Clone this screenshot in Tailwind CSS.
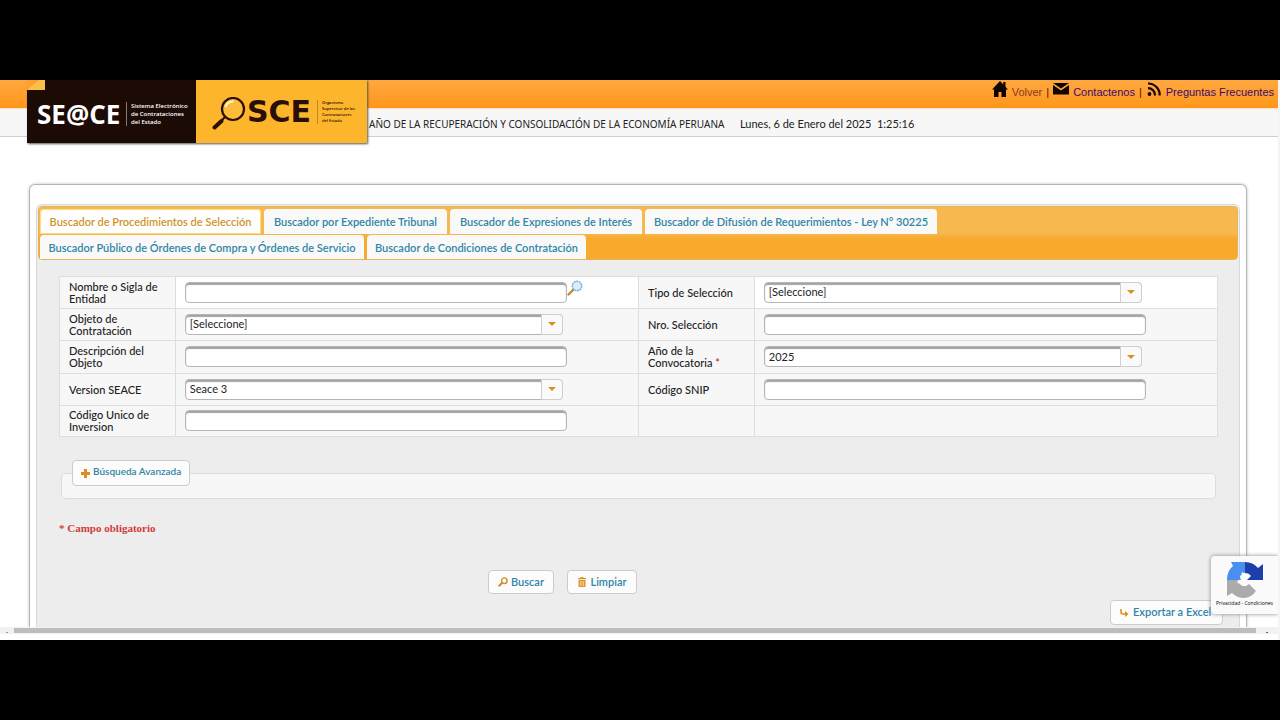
<!DOCTYPE html>
<html lang="es">
<head>
    <meta charset="UTF-8">
    <meta name="viewport" content="width=device-width, initial-scale=1.0">
    <title>SEACE - Buscador de Procedimientos de Selección</title>
    <script src="https://cdn.jsdelivr.net/npm/@tailwindcss/browser@4"></script>
</head>
<body class="bg-black font-['Lato','Noto_Sans',sans-serif] text-[11px] text-[#222]">

    <div class="h-screen flex flex-col py-20">
        <div class="relative flex-1 min-h-0 flex flex-col bg-white overflow-hidden border-r-2 border-[#f4f4f4]">

            <!-- Header -->
            <header class="relative shrink-0">
                <nav class="h-7 flex items-start justify-end gap-1 pr-1 bg-linear-to-b from-[#ffa840] to-[#ff9616] font-['Liberation_Sans',sans-serif] text-[11px] leading-6 text-[#4a1500]">
                    <svg class="w-4 h-4 mt-px" viewBox="0 0 16 16" fill="#100500"><path d="M8 0 0 8.500h2V16h4.500v-5h3v5H14V8.500h2L13.500 5.800V1h-2.200v2.500z"/></svg>
                    <a href="#" class="text-[#8c3a1c]">Volver</a>
                    <span>|</span>
                    <svg class="w-4 h-4 mt-px" viewBox="0 0 16 16" fill="#100500"><path d="M0 2h16L8 7.500zM0 4l8 5.500L16 4v9.500H0z"/></svg>
                    <a href="#" class="text-[#3b0a6b]">Contactenos</a>
                    <span>|</span>
                    <svg class="w-4 h-4 mt-px" viewBox="0 0 16 16" fill="none" stroke="#100500" stroke-width="2.200"><circle cx="3.500" cy="13" r="1.900" fill="#100500" stroke="none"/><path d="M2 7.200a7 7 0 0 1 7 7.300M2 2.500a11.500 11.500 0 0 1 11.700 12"/></svg>
                    <a href="#" class="text-[#3b0a6b]">Preguntas Frecuentes</a>
                </nav>
                <div class="h-[29px] flex items-center gap-6 pl-[369px] pt-[3px] bg-[#f7f7f7] border-t border-t-[#fbe3c6] border-b border-b-[#cfcfcf]">
                    <span class="w-[347px] whitespace-nowrap font-['Noto_Sans',sans-serif] text-[10px]">AÑO DE LA RECUPERACIÓN Y CONSOLIDACIÓN DE LA ECONOMÍA PERUANA</span>
                    <span class="whitespace-nowrap">Lunes, 6 de Enero del 2025&nbsp; 1:25:16</span>
                </div>

                <!-- Logos -->
                <div class="absolute left-[27px] top-0 flex h-[63px] shadow-[1px_1px_2px_#555]">
                    <div class="relative w-[169px] flex items-center gap-1 pl-2.5 pt-1 bg-[#1c0a05] text-white">
                        <svg class="absolute left-0 top-0 w-[18px] h-2.5" viewBox="0 0 18 10"><path d="M0 0h18v10H0z" fill="#ffa02c"/><path d="M0 10 12 0h6v10z" fill="#f9bf4a"/></svg>
                        <span class="w-[85px] font-['Open_Sans',sans-serif] font-bold text-[26px] leading-8 whitespace-nowrap">SE@CE</span>
                        <span class="pl-1 border-l border-[#8a7a74] font-['Open_Sans',sans-serif] text-[6px] leading-[8px] font-semibold whitespace-nowrap">Sistema Electrónico<br>de Contrataciones<br>del Estado</span>
                    </div>
                    <div class="w-[171px] flex items-center pl-4 bg-[#fdb52c] text-[#2a0f08]">
                        <svg class="w-[35px] h-[34px] mt-1" viewBox="0 0 35 34" fill="none" stroke="#2a0f08"><circle cx="21" cy="12" r="11" stroke-width="2.200" fill="#fdbb3c"/><path d="M13.500 10a8 8 0 0 1 8-5.500" stroke="#fff3d0" stroke-width="2"/><path d="m13 20-3 3" stroke-width="2"/><path d="m9.500 24-7 6.500" stroke-width="4" stroke-linecap="round"/></svg>
                        <span class="w-[70px] font-['DejaVu_Sans',sans-serif] font-bold text-[30px] leading-8 whitespace-nowrap">SCE</span>
                        <span class="pl-1 border-l border-[#b98a35] font-['Open_Sans',sans-serif] text-[4px] leading-[6px] font-semibold whitespace-nowrap">Organismo<br>Supervisor de las<br>Contrataciones<br>del Estado</span>
                    </div>
                </div>
            </header>

            <!-- Main panel -->
            <main class="flex-1 min-h-0 mt-[47px] ml-[29px] mr-[31px] px-1.5 pt-[19px] border border-b-0 border-[#b5b5b5] rounded-t-md shadow-[0_0_3px_#bbb] overflow-hidden">
                <div class="h-full px-px pt-px border border-b-0 border-[#d8d8d8] rounded-t-md bg-[#ededed]">

                    <!-- Tabs -->
                    <div class="flex flex-col gap-px pt-0.5 px-px border border-[#e3b45c] rounded bg-linear-to-b from-[#f6b84f] from-50% to-[#f7aa2e] to-60% text-[#2f86a5] font-semibold leading-[26px]">
                        <div class="flex gap-[3px]">
                            <button class="w-[221px] h-[25px] rounded-t-sm bg-white text-[#cf9427] whitespace-nowrap shadow-[inset_0_0_1px_1px_#fbdc7a]">Buscador de Procedimientos de Selección</button>
                            <button class="w-[183px] h-[25px] rounded-t-sm bg-[#f9f9f9] whitespace-nowrap">Buscador por Expediente Tribunal</button>
                            <button class="w-[192px] h-[25px] rounded-t-sm bg-[#f9f9f9] whitespace-nowrap">Buscador de Expresiones de Interés</button>
                            <button class="w-[292px] h-[25px] rounded-t-sm bg-[#f9f9f9] whitespace-nowrap">Buscador de Difusión de Requerimientos - Ley N° 30225</button>
                        </div>
                        <div class="flex gap-[3px]">
                            <button class="w-[324px] h-6 rounded-t-sm bg-[#f9f9f9] whitespace-nowrap">Buscador Público de Órdenes de Compra y Órdenes de Servicio</button>
                            <button class="w-[219px] h-6 rounded-t-sm bg-[#f9f9f9] whitespace-nowrap">Buscador de Condiciones de Contratación</button>
                        </div>
                    </div>

                    <!-- Search form -->
                    <form class="pl-[21px] pr-5 pt-4">
                        <table class="w-full table-fixed border-collapse bg-[#f7f7f7] leading-[12px] [&_td]:border [&_td]:border-[#dedede] [&_th]:border [&_th]:border-[#dedede] [&_th]:px-[9px] [&_th]:text-left [&_th]:font-medium [&_td]:pl-[9px] [&_td]:pb-px [&_td]:pt-0">
                            <colgroup>
                                <col class="w-[10%]">
                                <col class="w-[40%]">
                                <col class="w-[10%]">
                                <col class="w-[40%]">
                            </colgroup>
                            <tr class="h-8">
                                <th><label for="entidad">Nombre o Sigla de Entidad</label></th>
                                <td class="bg-white">
                                    <div class="flex items-center">
                                        <input id="entidad" type="text" class="w-[382px] h-[21px] px-1 bg-white border border-[#b5b5b5] rounded shadow-[inset_0_2px_1px_#a3a3a3]">
                                        <button type="button" aria-label="Buscar entidad" class="mb-2">
                                            <svg class="w-4 h-4" viewBox="0 0 16 16" fill="none"><path d="m1.500 14.500 5-5" stroke="#c8862c" stroke-width="2.400" stroke-linecap="round"/><path d="m6 10 2-2" stroke="#555" stroke-width="1.500"/><circle cx="10" cy="6" r="4.700" fill="#d9eefa" stroke="#7fb4d6" stroke-width="1.500" stroke-dasharray="2 .6"/></svg>
                                        </button>
                                    </div>
                                </td>
                                <th><label for="tipo">Tipo de Selección</label></th>
                                <td class="bg-white">
                                    <div class="relative w-[378px]">
                                        <select id="tipo" class="block appearance-none w-full h-[21px] px-1 bg-white border border-[#b5b5b5] rounded shadow-[inset_0_2px_1px_#a3a3a3]"><option>[Seleccione]</option></select>
                                        <span class="absolute inset-y-0 right-0 w-[22px] flex items-center justify-center border border-[#cfcfcf] rounded-r bg-[#fafafa] pointer-events-none"><svg class="w-2 h-1" viewBox="0 0 8 4" fill="#d98f22"><path d="M0 0h8L4 4z"/></svg></span>
                                    </div>
                                </td>
                            </tr>
                            <tr class="h-8">
                                <th><label for="objeto">Objeto de Contratación</label></th>
                                <td>
                                    <div class="relative w-[378px]">
                                        <select id="objeto" class="block appearance-none w-full h-[21px] px-1 bg-white border border-[#b5b5b5] rounded shadow-[inset_0_2px_1px_#a3a3a3]"><option>[Seleccione]</option></select>
                                        <span class="absolute inset-y-0 right-0 w-[22px] flex items-center justify-center border border-[#cfcfcf] rounded-r bg-[#fafafa] pointer-events-none"><svg class="w-2 h-1" viewBox="0 0 8 4" fill="#d98f22"><path d="M0 0h8L4 4z"/></svg></span>
                                    </div>
                                </td>
                                <th><label for="nro">Nro. Selección</label></th>
                                <td><input id="nro" type="text" class="block w-[382px] h-[21px] px-1 bg-white border border-[#b5b5b5] rounded shadow-[inset_0_2px_1px_#a3a3a3]"></td>
                            </tr>
                            <tr class="h-[33px]">
                                <th><label for="descripcion">Descripción del Objeto</label></th>
                                <td><input id="descripcion" type="text" class="block w-[382px] h-[21px] px-1 bg-white border border-[#b5b5b5] rounded shadow-[inset_0_2px_1px_#a3a3a3]"></td>
                                <th><label for="anio">Año de la Convocatoria <span class="text-[#c22]">*</span></label></th>
                                <td>
                                    <div class="relative w-[378px]">
                                        <select id="anio" class="block appearance-none w-full h-[21px] px-1 bg-white border border-[#b5b5b5] rounded shadow-[inset_0_2px_1px_#a3a3a3]"><option>2025</option></select>
                                        <span class="absolute inset-y-0 right-0 w-[22px] flex items-center justify-center border border-[#cfcfcf] rounded-r bg-[#fafafa] pointer-events-none"><svg class="w-2 h-1" viewBox="0 0 8 4" fill="#d98f22"><path d="M0 0h8L4 4z"/></svg></span>
                                    </div>
                                </td>
                            </tr>
                            <tr class="h-8">
                                <th><label for="version">Version SEACE</label></th>
                                <td>
                                    <div class="relative w-[378px]">
                                        <select id="version" class="block appearance-none w-full h-[21px] px-1 bg-white border border-[#b5b5b5] rounded shadow-[inset_0_2px_1px_#a3a3a3]"><option>Seace 3</option></select>
                                        <span class="absolute inset-y-0 right-0 w-[22px] flex items-center justify-center border border-[#cfcfcf] rounded-r bg-[#fafafa] pointer-events-none"><svg class="w-2 h-1" viewBox="0 0 8 4" fill="#d98f22"><path d="M0 0h8L4 4z"/></svg></span>
                                    </div>
                                </td>
                                <th><label for="snip">Código SNIP</label></th>
                                <td><input id="snip" type="text" class="block w-[382px] h-[21px] px-1 bg-white border border-[#b5b5b5] rounded shadow-[inset_0_2px_1px_#a3a3a3]"></td>
                            </tr>
                            <tr class="h-[31px]">
                                <th><label for="codigo">Código Unico de Inversion</label></th>
                                <td><input id="codigo" type="text" class="block w-[382px] h-[21px] px-1 bg-white border border-[#b5b5b5] rounded shadow-[inset_0_2px_1px_#a3a3a3]"></td>
                                <th></th>
                                <td></td>
                            </tr>
                        </table>

                        <!-- Advanced search -->
                        <fieldset class="mt-[23px] mx-0.5 px-2.5 h-[39px] border border-[#dcdcdc] rounded bg-[#f7f7f7]">
                            <legend>
                                <button type="button" class="h-[26px] flex items-center gap-[3px] px-2 pb-1 border border-[#ccc] rounded bg-[#fcfcfc] text-[#2f86a5] text-[10px] font-semibold">
                                    <svg class="w-[9px] h-[9px] mt-1" viewBox="0 0 9 9" fill="#d98f22"><path d="M3 0h3v3h3v3H6v3H3V6H0V3h3z"/></svg>
                                    Búsqueda Avanzada
                                </button>
                            </legend>
                        </fieldset>

                        <p class="mt-[21px] font-['Liberation_Serif',serif] font-bold text-[11px] leading-4 text-[#d33b3b]">* Campo obligatorio</p>

                        <!-- Actions -->
                        <div class="mt-[34px] flex gap-[13px] pl-[429px] text-[#2f86a5] font-semibold">
                            <button type="button" class="w-[66px] h-6 flex items-center justify-center gap-[3px] border border-[#ccc] rounded bg-[#fcfcfc]">
                                <svg class="w-2.5 h-2.5" viewBox="0 0 10 10" fill="none" stroke="#cf8f2a"><circle cx="6.300" cy="3.700" r="2.800" stroke-width="1.400"/><path d="m4.200 5.800-3.500 3.500" stroke-width="2"/></svg>
                                Buscar
                            </button>
                            <button type="button" class="w-[70px] h-6 flex items-center justify-center gap-[3px] border border-[#ccc] rounded bg-[#fcfcfc]">
                                <svg class="w-2.5 h-2.5" viewBox="0 0 10 10" fill="#d9982c"><path d="M1 1h2.500V0h3v1H9v1.200H1zM1.500 3h7v7h-7z"/><path d="M3.500 4v5M5 4v5M6.500 4v5" stroke="#fbe9c8" stroke-width=".6"/></svg>
                                Limpiar
                            </button>
                        </div>
                        <div class="mt-1.5 -mr-[5px] flex justify-end text-[#2f86a5] font-semibold">
                            <button type="button" class="w-[113px] h-[25px] flex items-center gap-1 pl-2 border border-[#ccc] rounded bg-[#fcfcfc] whitespace-nowrap">
                                <svg class="w-2.5 h-2.5" viewBox="0 0 10 10" fill="none" stroke="#d98f22" stroke-width="1.600"><path d="M2 1v3q0 2 2 2h3.500"/><path d="M6 3v6l3.500-3z" fill="#d98f22" stroke="none"/></svg>
                                Exportar a Excel
                            </button>
                        </div>
                    </form>
                </div>
            </main>

            <!-- Horizontal scrollbar -->
            <div class="shrink-0 h-[13px] pb-1.5 bg-white">
                <div class="h-[7px] flex items-center bg-[#f1f1f1]">
                    <span class="w-3.5 flex justify-center"><i class="w-0.5 h-px mt-1 bg-[#999]"></i></span>
                    <span class="flex-1 h-[5px] bg-[#bdbdbd]"></span>
                    <span class="w-[22px] flex justify-center"><i class="w-0.5 h-px mt-1 bg-[#666]"></i></span>
                </div>
            </div>

            <!-- reCAPTCHA badge -->
            <div class="absolute right-0 bottom-[26px] w-[67px] h-[58px] flex flex-col items-center pt-1.5 bg-[#fafafa] rounded-l-sm shadow-[0_0_4px_#888]">
                <svg class="w-9 h-9 shrink-0" viewBox="0 0 36 36">
                    <path d="M18 0v11q-2 0-3-1 0 3-2 4 0 2 1 4H0Q0 9 6 4L4 0z" fill="#4a8ef0"/>
                    <path d="M18 0q8 0 13 6l5-4v16H20l4-4q-2-3-6-3z" fill="#1c3fae"/>
                    <path d="M0 18h11q0 2-1 3 3 0 4 2 4 3 8-1l7 7q-5 7-12 7-7 0-12-5l-5 3z" fill="#ababab"/>
                </svg>
                <span class="font-['Open_Sans',sans-serif] text-[5px] leading-[10px] text-black whitespace-nowrap"><a href="#">Privacidad</a> - <a href="#">Condiciones</a></span>
            </div>
        </div>
    </div>

</body>
</html>
